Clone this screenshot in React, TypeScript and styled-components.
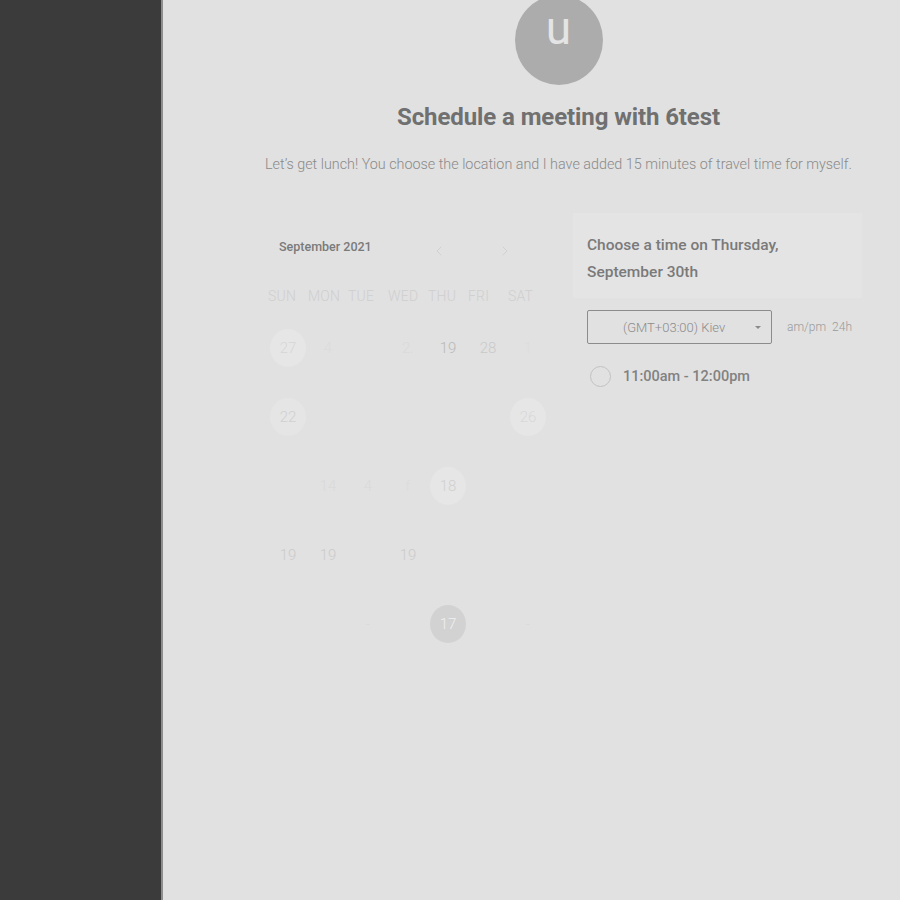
import styled, { createGlobalStyle } from "styled-components";
import { ChevronLeft, ChevronRight } from "lucide-react";

const GlobalStyle = createGlobalStyle`
  html, body {
    margin: 0;
    padding: 0;
    background: #e1e1e1;
    font-family: Roboto, "Liberation Sans", sans-serif;
  }
`;

const Page = styled.div`
  display: grid;
  grid-template-columns: 161px 2px 1fr;
  width: 900px;
  height: 900px;
  overflow: hidden;
`;

const Sidebar = styled.aside`
  background: #3b3b3b;
`;

const Divider = styled.div`
  background: #8e8e8e;
`;

const Main = styled.main`
  background: #e1e1e1;
  padding-left: 102px;
`;

const Content = styled.div`
  width: 587px;
  display: flex;
  flex-direction: column;
  align-items: center;
`;

const Avatar = styled.div`
  width: 88px;
  height: 90px;
  margin-top: -5px;
  border-radius: 50%;
  background: #acacac;
  color: #e4e4e4;
  font-size: 46px;
  font-weight: 400;
  line-height: 1;
  display: flex;
  align-items: center;
  justify-content: center;
  padding-bottom: 24px;
  box-sizing: border-box;
`;

const Title = styled.h1`
  margin: 18px 0 0;
  font-size: 24px;
  font-weight: 700;
  color: #707070;
  letter-spacing: -0.1px;
`;

const Subtitle = styled.p`
  margin: 25px 0 0;
  font-size: 14.35px;
  font-weight: 300;
  color: #8a8a8a;
  white-space: nowrap;
`;

const Body = styled.div`
  align-self: flex-start;
  display: flex;
  margin-top: 30px;
`;

const Calendar = styled.section`
  width: 305px;
  padding-left: 3px;
  padding-top: 31px;
`;

const MonthBar = styled.div`
  display: grid;
  grid-template-columns: 152px 66px 40px;
  align-items: center;
  padding-left: 11px;
  height: 16px;
`;

const MonthLabel = styled.span`
  font-size: 12.5px;
  font-weight: 500;
  color: #7a7a7a;
`;

const Arrow = styled.span`
  color: #cdcdcd;
  display: flex;
  padding-top: 9px;
`;

const Grid = styled.div`
  display: grid;
  grid-template-columns: repeat(7, 40px);
`;

const WeekDay = styled.span`
  margin-top: 38px;
  font-size: 14px;
  font-weight: 300;
  color: #cfcfcf;
  letter-spacing: 0.2px;
  height: 16px;
  line-height: 16px;
`;

const DayCell = styled.div`
  height: 69px;
  display: flex;
  align-items: center;
  justify-content: center;
`;

const Day = styled.span<{ $tone: string; $circle?: string }>`
  width: 36px;
  height: 38px;
  border-radius: 50%;
  display: flex;
  align-items: center;
  justify-content: center;
  font-size: 15px;
  font-weight: 300;
  color: ${({ $tone }) => $tone};
  background: ${({ $circle }) => $circle || "transparent"};
`;

const Weeks = styled.div`
  margin-top: 9px;
`;

const Panel = styled.section`
  width: 289px;
  padding-top: 10px;
`;

const PanelHead = styled.div`
  background: #e4e4e4;
  padding: 19px 14px 12px;
  font-size: 15.5px;
  font-weight: 500;
  line-height: 27px;
  color: #7a7a7a;
`;

const Controls = styled.div`
  display: flex;
  align-items: center;
  margin: 12px 0 0 14px;
  gap: 15px;
`;

const Select = styled.div`
  width: 185px;
  height: 34px;
  border: 1px solid #8c8c8c;
  border-radius: 2px;
  display: flex;
  align-items: center;
  padding: 0 10px 0 35px;
  box-sizing: border-box;
  font-size: 13px;
  font-weight: 300;
  color: #8c8c8c;
  justify-content: space-between;
`;

const Caret = styled.span`
  width: 0;
  height: 0;
  border-left: 3px solid transparent;
  border-right: 3px solid transparent;
  border-top: 3.5px solid #8a8a8a;
`;

const Format = styled.span`
  font-size: 12px;
  font-weight: 300;
  color: #9a9a9a;
  word-spacing: 3px;
`;

const Slot = styled.label`
  display: flex;
  align-items: center;
  gap: 12px;
  margin: 22px 0 0 17px;
  font-size: 14.5px;
  font-weight: 500;
  color: #828282;
`;

const Radio = styled.span`
  width: 19px;
  height: 19px;
  border: 1px solid #c2c2c2;
  border-radius: 50%;
`;

type Cell = { n: string; tone: string; circle?: string } | null;

const faint = "#dadada";
const soft = "#cbcbcb";

const weeks: Cell[][] = [
  [
    { n: "27", tone: "#d6d6d6", circle: "#e6e6e6" },
    { n: "4", tone: "#dcdcdc" },
    null,
    { n: "2.", tone: faint },
    { n: "19", tone: "#b9b9b9" },
    { n: "28", tone: "#c9c9c9" },
    { n: "1", tone: "#dddddd" },
  ],
  [
    { n: "22", tone: "#d0d0d0", circle: "#e5e5e5" },
    null,
    null,
    null,
    null,
    null,
    { n: "26", tone: "#d8d8d8", circle: "#e6e6e6" },
  ],
  [
    null,
    { n: "14", tone: faint },
    { n: "4", tone: faint },
    { n: "f", tone: "#dcdcdc" },
    { n: "18", tone: "#d0d0d0", circle: "#e6e6e6" },
    null,
    null,
  ],
  [
    { n: "19", tone: soft },
    { n: "19", tone: soft },
    null,
    { n: "19", tone: soft },
    null,
    null,
    null,
  ],
  [
    null,
    null,
    { n: "-", tone: faint },
    null,
    { n: "17", tone: "#f0f0f0", circle: "#d2d2d2" },
    null,
    { n: "-", tone: faint },
  ],
];

const weekDays = ["SUN", "MON", "TUE", "WED", "THU", "FRI", "SAT"];

export default function App() {
  return (
    <>
      <GlobalStyle />
      <Page>
        <Sidebar />
        <Divider />
        <Main>
          <Content>
            <Avatar>u</Avatar>
            <Title>Schedule a meeting with 6test</Title>
            <Subtitle>
              Let’s get lunch! You choose the location and I have added 15 minutes of travel time for myself.
            </Subtitle>
            <Body>
              <Calendar>
                <MonthBar>
                  <MonthLabel>September 2021</MonthLabel>
                  <Arrow>
                    <ChevronLeft size={16} strokeWidth={1.2} />
                  </Arrow>
                  <Arrow>
                    <ChevronRight size={16} strokeWidth={1.2} />
                  </Arrow>
                </MonthBar>
                <Grid>
                  {weekDays.map((d) => (
                    <WeekDay key={d}>{d}</WeekDay>
                  ))}
                </Grid>
                <Weeks>
                  {weeks.map((week, wi) => (
                    <Grid key={wi}>
                      {week.map((cell, ci) => (
                        <DayCell key={ci}>
                          {cell && (
                            <Day $tone={cell.tone} $circle={cell.circle}>
                              {cell.n}
                            </Day>
                          )}
                        </DayCell>
                      ))}
                    </Grid>
                  ))}
                </Weeks>
              </Calendar>
              <Panel>
                <PanelHead>
                  Choose a time on Thursday,
                  <br />
                  September 30th
                </PanelHead>
                <Controls>
                  <Select>
                    (GMT+03:00) Kiev
                    <Caret />
                  </Select>
                  <Format>am/pm 24h</Format>
                </Controls>
                <Slot>
                  <Radio />
                  11:00am - 12:00pm
                </Slot>
              </Panel>
            </Body>
          </Content>
        </Main>
      </Page>
    </>
  );
}
